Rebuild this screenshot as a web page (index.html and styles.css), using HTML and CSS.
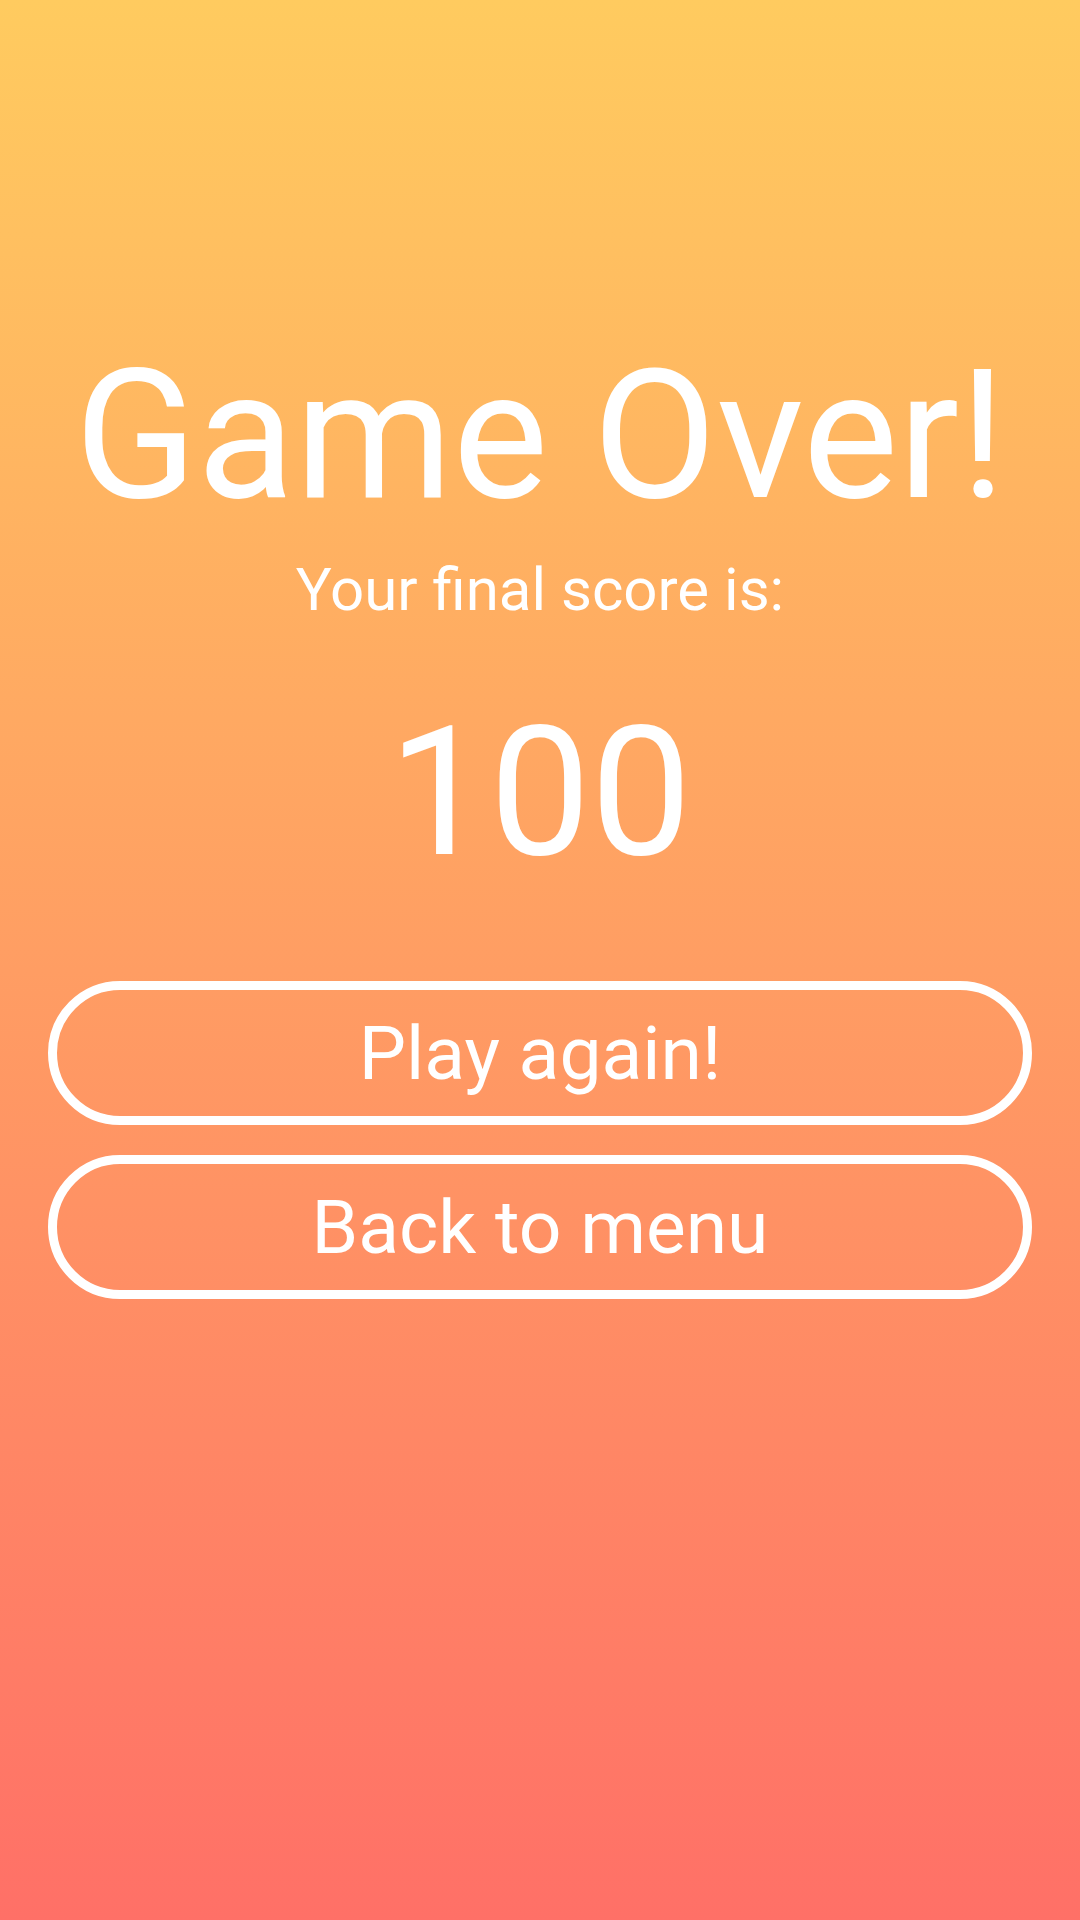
FILE: index.html
```html
<!DOCTYPE html>
<html>
<head>
<meta charset="utf-8">
<link rel="stylesheet" href="styles.css">
</head>
<body>
<main class="screen">
  <h1 class="title">Game Over!</h1>
  <p class="label">Your final score is:</p>
  <p class="score">100</p>
  <div class="actions">
    <button class="btn">Play again!</button>
    <button class="btn">Back to menu</button>
  </div>
</main>
</body>
</html>
```

FILE: styles.css
```css
html, body {
  margin: 0;
  padding: 0;
}
body {
  width: 1080px;
  height: 1920px;
  background: linear-gradient(to bottom, #ffcb5f 0%, #ff7067 100%);
  font-family: Roboto, "Noto Sans", sans-serif;
  color: #ffffff;
}
.screen {
  display: flex;
  flex-direction: column;
  align-items: center;
  padding-top: 330px;
}
.title {
  margin: 0;
  font-size: 180px;
  font-weight: 400;
  line-height: normal;
}
.label {
  margin: 13px 0 0;
  font-size: 60px;
  line-height: normal;
}
.score {
  margin: 62px 0 0;
  font-size: 180px;
  line-height: normal;
}
.actions {
  margin-top: 83px;
  width: 100%;
  padding: 0 48px;
  box-sizing: border-box;
  display: flex;
  flex-direction: column;
  gap: 30px;
}
.btn {
  height: 144px;
  box-sizing: border-box;
  border: 9px solid #ffffff;
  border-radius: 72px;
  background: transparent;
  color: #ffffff;
  font-family: Roboto, "Noto Sans", sans-serif;
  font-size: 75px;
  font-weight: 400;
  padding: 0;
  display: flex;
  align-items: center;
  justify-content: center;
}
```
